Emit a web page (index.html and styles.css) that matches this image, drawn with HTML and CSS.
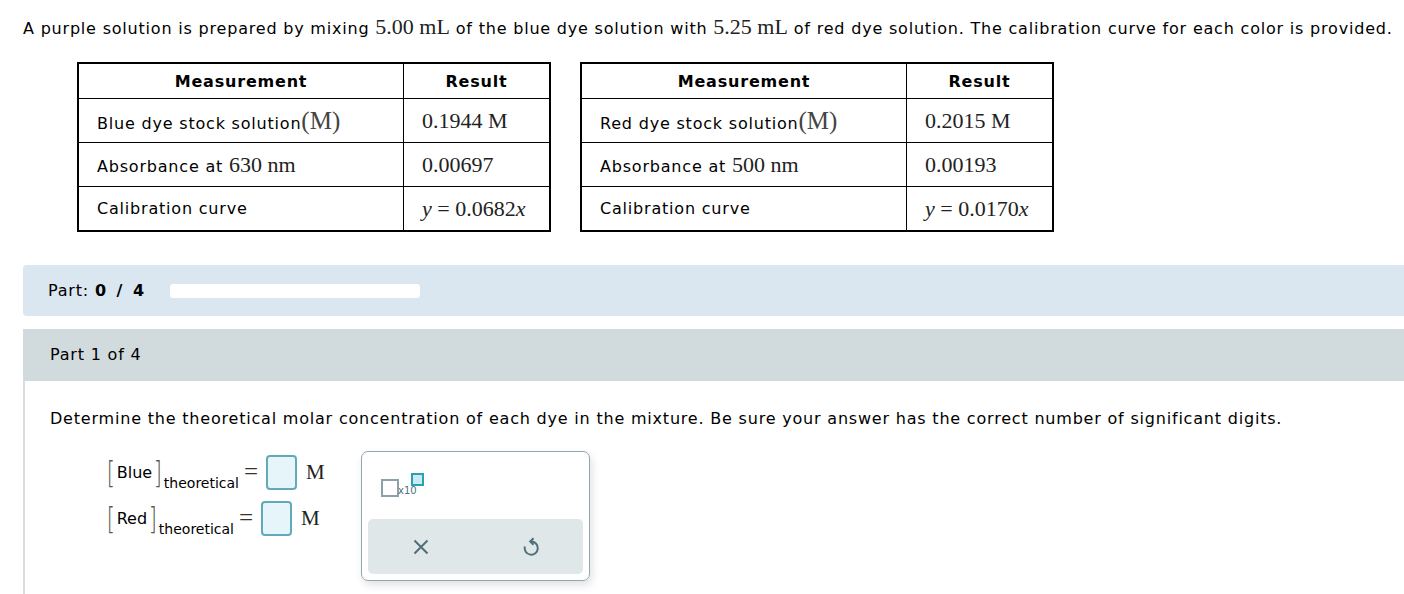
FILE: index.html
```html
<!DOCTYPE html>
<html lang="en">
<head>
    <meta charset="UTF-8">
    <title>Dye Mixture</title>
    <link rel="stylesheet" href="styles.css">
</head>
<body>
    <p class="intro">A purple solution is prepared by mixing <span class="m">5.00 mL</span> of the blue dye solution with <span class="m">5.25 mL</span> of red dye solution. The calibration curve for each color is provided.</p>

    <div class="tables">
        <table class="data">
            <tr><th class="c1">Measurement</th><th class="c2">Result</th></tr>
            <tr><td>Blue dye stock solution<span class="m paren">(M)</span></td><td class="m">0.1944 M</td></tr>
            <tr><td>Absorbance at <span class="m">630 nm</span></td><td class="m">0.00697</td></tr>
            <tr><td>Calibration curve</td><td class="m"><i>y</i> = 0.0682<i>x</i></td></tr>
        </table>
        <table class="data">
            <tr><th class="c1">Measurement</th><th class="c2">Result</th></tr>
            <tr><td>Red dye stock solution<span class="m paren">(M)</span></td><td class="m">0.2015 M</td></tr>
            <tr><td>Absorbance at <span class="m">500 nm</span></td><td class="m">0.00193</td></tr>
            <tr><td>Calibration curve</td><td class="m"><i>y</i> = 0.0170<i>x</i></td></tr>
        </table>
    </div>

    <!-- progress -->
    <div class="part-bar">
        <span class="part-label">Part: <b>0 / 4</b></span>
        <div class="progress"></div>
    </div>

    <div class="part-head">Part 1 of 4</div>

    <div class="part-body">
        <p class="question">Determine the theoretical molar concentration of each dye in the mixture. Be sure your answer has the correct number of significant digits.</p>

        <div class="answer-row">
            <div class="equations">
                <div class="eq">
                    <span class="br">[</span><span class="nm">Blue</span><span class="br">]</span><sub>theoretical</sub>
                    <span class="eqs">=</span><span class="box"></span><span class="m unit">M</span>
                </div>
                <div class="eq">
                    <span class="br">[</span><span class="nm">Red</span><span class="br">]</span><sub>theoretical</sub>
                    <span class="eqs">=</span><span class="box"></span><span class="m unit">M</span>
                </div>
            </div>

            <div class="palette">
                <div class="tools">
                    <span class="sci"><span class="sq"></span><span class="x10">x10</span><span class="sq small"></span></span>
                </div>
                <div class="actions">
                    <svg width="18" height="18" viewBox="0 0 18 18"><path d="M2.5 2.5L15.5 15.5M15.5 2.5L2.5 15.5" stroke="#4e6f7c" stroke-width="2" fill="none"/></svg>
                    <svg width="20" height="22" viewBox="0 0 20 22"><path d="M3.8 10.5A6.6 6.6 0 1 0 10 5.5" stroke="#4e6f7c" stroke-width="2" fill="none"/><path d="M12.5 2.2L9.2 5.5L12.5 8.8" stroke="#4e6f7c" stroke-width="2" fill="none"/></svg>
                </div>
            </div>
        </div>
    </div>
</body>
</html>
```

FILE: styles.css
```css
/* General styling */
body {
    font-family: "DejaVu Sans", Verdana, sans-serif;
    font-size: 16px;
    letter-spacing: 0.8px;
    color: #000;
    margin: 0;
    padding-left: 23px;
    background: #fff;
}

.m {
    font-family: "Liberation Serif", "Times New Roman", serif;
    font-size: 22px;
    letter-spacing: 0;
    color: #222;
}

.intro {
    margin: 16px 0 0 0;
    line-height: 22px;
    white-space: nowrap;
}

/* Tables */
.tables {
    display: flex;
    gap: 29px;
    margin: 22px 0 0 54px;
}

table.data {
    border-collapse: collapse;
    border: 2px solid #000;
}

table.data th {
    font-weight: bold;
    height: 34px;
    padding: 0;
    border: 1px solid #000;
    font-size: 16px;
}

table.data th.c1 { width: 324px; }
table.data th.c2 { width: 145px; }

table.data td {
    height: 43px;
    padding: 0 0 0 18px;
    border: 1px solid #000;
    white-space: nowrap;
}

.paren {
    font-size: 25px;
    color: #444;
}

/* Part bar */
.part-bar {
    margin-top: 33px;
    height: 51px;
    background-color: #dae6f0;
    border-radius: 4px 0 0 4px;
    display: flex;
    align-items: center;
    padding-left: 25px;
}

.part-label b {
    font-weight: bold;
    letter-spacing: 1.5px;
    word-spacing: 2px;
}

.progress {
    width: 250px;
    height: 14px;
    background: #fff;
    border-radius: 3px;
    margin-left: 24px;
}

.part-head {
    margin-top: 13px;
    height: 52px;
    line-height: 52px;
    background-color: #d1dadd;
    padding-left: 27px;
}

.part-body {
    border-left: 2px solid #d8dee0;
    padding: 27px 0 20px 25px;
}

.question {
    margin: 0;
    line-height: 22px;
}

/* Answer area */
.answer-row {
    display: flex;
    align-items: flex-start;
    margin-top: 21px;
}

.equations {
    margin-left: 55px;
    width: 256px;
    margin-top: -2px;
}

.eq {
    display: flex;
    align-items: center;
    height: 46px;
}

.br {
    font-family: "DejaVu Sans", sans-serif;
    font-size: 30px;
    font-weight: 200;
    color: #555;
    letter-spacing: 0;
    transform: scaleX(0.7);
}

.nm {
    font-size: 16px;
    letter-spacing: 0;
}

.eq sub {
    font-size: 14px;
    align-self: flex-end;
    margin-bottom: 4px;
    vertical-align: baseline;
    letter-spacing: 0;
}

.eqs {
    font-family: "Liberation Serif", serif;
    font-size: 25px;
    margin: 0 7px 0 5px;
    color: #333;
}

.box {
    width: 27px;
    height: 31px;
    border: 2px solid #63aab8;
    border-radius: 4px;
    background: #e5f5f9;
}

.unit {
    margin-left: 9px;
    font-size: 21px;
}

/* Palette */
.palette {
    width: 229px;
    height: 130px;
    border: 1px solid #90a7b0;
    border-radius: 7px;
    box-shadow: 2px 4px 8px rgba(0, 0, 0, 0.12);
    display: flex;
    flex-direction: column;
    padding: 0 6px 6px 6px;
    box-sizing: border-box;
}

.tools {
    flex: 1;
    position: relative;
}

.sci {
    position: absolute;
    left: 13px;
    top: 21px;
    width: 50px;
    height: 30px;
}

.sq {
    position: absolute;
    left: 0;
    top: 6px;
    width: 14px;
    height: 14px;
    border: 2px solid #8fa1a8;
}

.sq.small {
    left: 30px;
    top: 0;
    width: 9px;
    height: 9px;
    border-color: #2aa0b4;
    background: #c8eaf0;
}

.x10 {
    position: absolute;
    left: 17px;
    top: 12px;
    font-size: 10px;
    letter-spacing: 0;
    color: #4e6f7c;
}

.actions {
    height: 55px;
    background-color: #e0e7e9;
    border-radius: 5px;
    display: flex;
    align-items: center;
    justify-content: space-between;
    padding: 0 42px 0 44px;
}
```
